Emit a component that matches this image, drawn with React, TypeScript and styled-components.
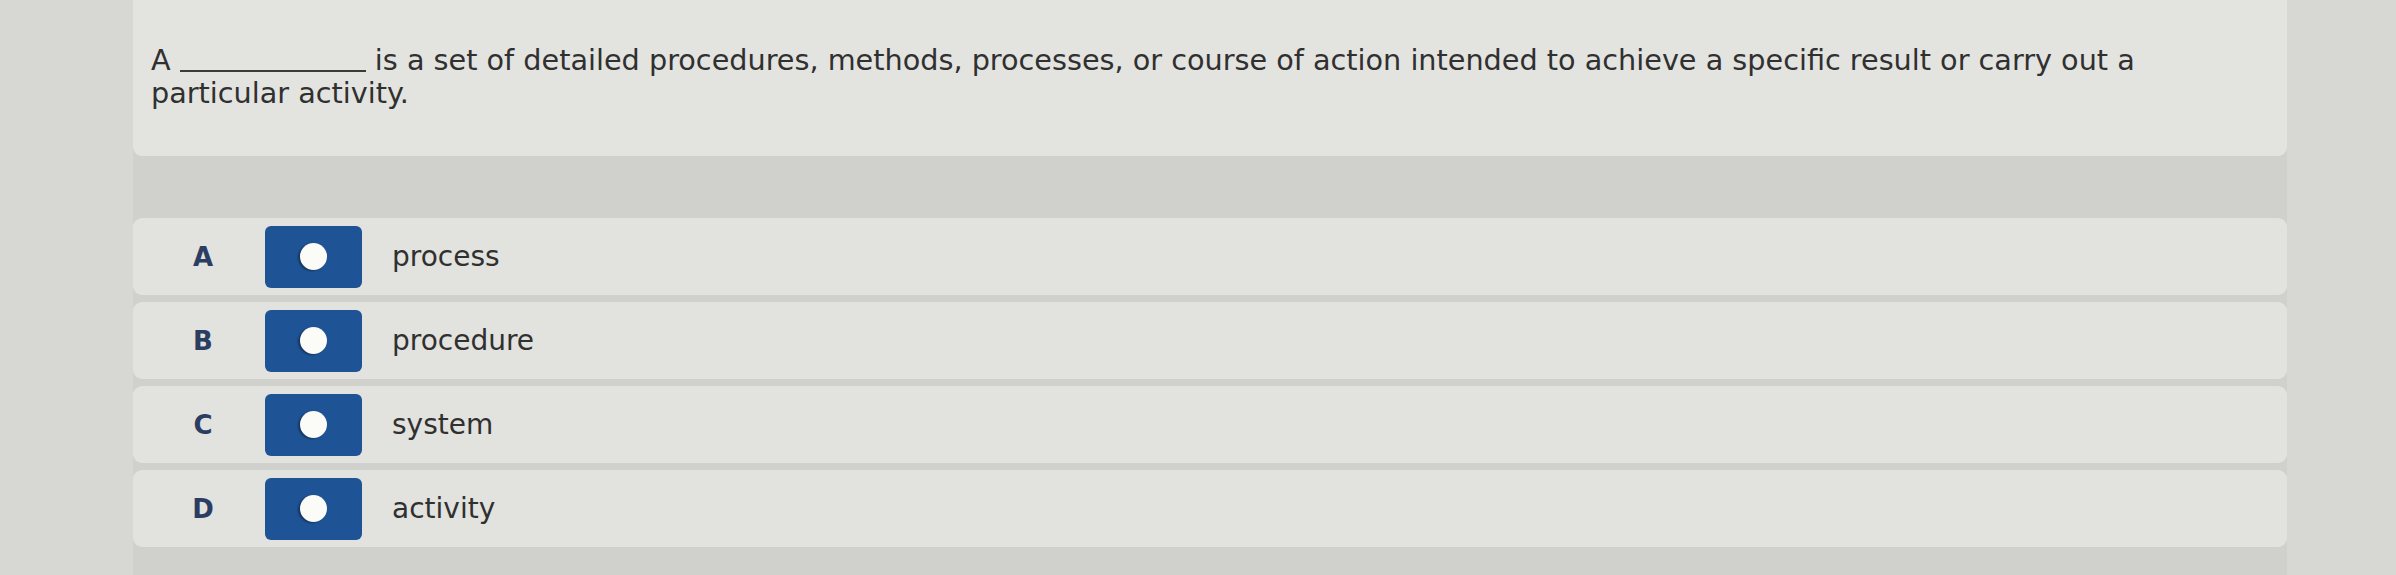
import React from 'react';
import styled, {createGlobalStyle} from "styled-components";

const GlobalStyle = createGlobalStyle`
    html, body {
        margin: 0;
        padding: 0;
        background: #d7d7d4;
    }
    body {
        font-family: 'DejaVu Sans', Verdana, sans-serif;
    }
`

const options = [
    {letter: 'A', text: 'process'},
    {letter: 'B', text: 'procedure'},
    {letter: 'C', text: 'system'},
    {letter: 'D', text: 'activity'},
]

export default function App() {
    return (
        <>
            <GlobalStyle/>
            <Page>
                <Column>
                    <QuestionCard>
                        <QuestionText>
                            A <Blank aria-label="blank"/> is a set of detailed procedures, methods, processes, or
                            course of action intended to achieve a specific result or carry out a particular activity.
                        </QuestionText>
                    </QuestionCard>

                    <OptionList>
                        {options.map(o => (
                            <OptionRow key={o.letter}>
                                <Letter>{o.letter}</Letter>
                                <RadioButton type="button" aria-label={o.text}>
                                    <Dot/>
                                </RadioButton>
                                <OptionText>{o.text}</OptionText>
                            </OptionRow>
                        ))}
                    </OptionList>
                </Column>
            </Page>
        </>
    );
}

const Page = styled.div`
    width: 2396px;
    height: 575px;
    overflow: hidden;
    display: flex;
    padding-left: 133px;
    box-sizing: border-box;
`

const Column = styled.div`
    width: 2154px;
    height: 100%;
    background: #d0d0cd;
    display: flex;
    flex-direction: column;
    gap: 62px;
`

const QuestionCard = styled.section`
    background: #e3e3e0;
    border-radius: 0 0 9px 9px;
    padding: 44px 18px 46px 18px;
`

const QuestionText = styled.p`
    margin: 0;
    font-size: 28.7px;
    line-height: 33px;
    color: #303030;
`

const Blank = styled.span`
    display: inline-block;
    width: 186px;
    border-bottom: 2px solid #3a3a3a;
    vertical-align: -2px;
`

const OptionList = styled.div`
    display: flex;
    flex-direction: column;
    gap: 7px;
`

const OptionRow = styled.div`
    height: 77px;
    background: #e2e2df;
    border-radius: 9px;
    display: flex;
    align-items: center;
`

const Letter = styled.span`
    width: 124px;
    padding-left: 8px;
    text-align: center;
    font-weight: 700;
    font-size: 26px;
    color: #2b3e62;
`

const RadioButton = styled.button`
    width: 97px;
    height: 62px;
    border: none;
    padding: 0;
    border-radius: 6px;
    background: #1e5495;
    display: flex;
    align-items: center;
    justify-content: center;
    cursor: pointer;
`

const Dot = styled.span`
    width: 27px;
    height: 27px;
    border-radius: 50%;
    background: #fbfbf8;
    box-shadow: -2px 1px 2px rgba(0, 0, 0, 0.35);
`

const OptionText = styled.span`
    margin-left: 30px;
    font-size: 28px;
    color: #303030;
`
